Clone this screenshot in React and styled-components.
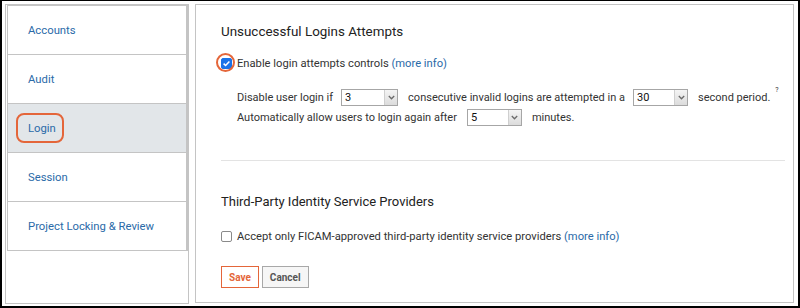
import React from 'react';
import styled, { createGlobalStyle } from 'styled-components';

const GlobalStyle = createGlobalStyle`
  html, body {
    margin: 0;
    padding: 0;
    background: #fff;
  }
  body {
    font-family: Roboto, "Liberation Sans", Arial, sans-serif;
    color: #333;
  }
`;

const Frame = styled.div`
  box-sizing: border-box;
  width: 800px;
  height: 308px;
  border-style: solid;
  border-color: #000;
  border-width: 1px 2px 2px 2px;
  padding: 3px 4px 0 3px;
  display: flex;
  gap: 6px;
  align-items: flex-start;
`;

const SideNav = styled.nav`
  box-sizing: border-box;
  width: 184px;
  height: 300px;
  border: 1px solid #c4c4c4;
  padding: 0 0 0 1px;
`;

const NavList = styled.ul`
  list-style: none;
  margin: 0;
  padding: 0;
  border: 1px solid #c4c4c4;
  border-right-width: 2px;
  border-bottom: none;
`;

const NavItem = styled.li`
  box-sizing: border-box;
  height: 49px;
  display: flex;
  align-items: center;
  padding-left: 20px;
  border-bottom: 1px solid #c4c4c4;
  background: ${({ active }) => (active ? '#e2e6e9' : '#fff')};
`;

const NavLink = styled.span`
  font-size: 11.3px;
  color: #2a6aa8;
  position: relative;
`;

const Highlight = styled.span`
  position: absolute;
  left: -12px;
  top: -9px;
  width: 44px;
  height: 26px;
  border: 2px solid #e4663a;
  border-radius: 8px;
`;

const Content = styled.section`
  box-sizing: border-box;
  width: 599px;
  height: 299px;
  border: 1px solid #c4c4c4;
  padding: 19px 8px 0 25px;
  display: flex;
  flex-direction: column;
`;

const Heading = styled.h3`
  margin: 0;
  font-size: ${({ size }) => size || 13}px;
  font-weight: 400;
  color: #222;
  line-height: 16px;
`;

const CheckRow = styled.label`
  display: flex;
  align-items: center;
  gap: 5px;
  font-size: 11.2px;
  color: #333;
  margin-top: ${({ top }) => top}px;
`;

const Box = styled.span`
  box-sizing: border-box;
  width: 11px;
  height: 11px;
  border-radius: 2px;
  border: 1px solid ${({ checked }) => (checked ? '#1a73e8' : '#8a8a8a')};
  background: ${({ checked }) => (checked ? '#1a73e8' : '#fff')};
  display: inline-flex;
  align-items: center;
  justify-content: center;
  position: relative;
  flex-shrink: 0;
`;

const Ring = styled.span`
  position: absolute;
  left: -6px;
  top: -6px;
  width: 19px;
  height: 19px;
  box-sizing: border-box;
  border: 2px solid #e4663a;
  border-radius: 50%;
`;

const More = styled.span`
  color: #2a6aa8;
`;

const Settings = styled.div`
  margin-top: 18px;
  padding-left: 16px;
  display: flex;
  flex-direction: column;
  gap: 2px;
`;

const SettingLine = styled.div`
  display: flex;
  align-items: center;
  font-size: 11px;
  color: #333;
  height: 18px;
`;

const Select = styled.span`
  box-sizing: border-box;
  display: inline-flex;
  align-items: center;
  justify-content: space-between;
  width: ${({ w }) => w}px;
  height: 17px;
  border: 1px solid #a6a6a6;
  margin: 0 ${({ after }) => after}px 0 ${({ before }) => before}px;
  padding-left: 3px;
  font-size: 11px;
  color: #111;
  background: #fff;
`;

const Arrow = styled.span`
  box-sizing: border-box;
  width: 13px;
  height: 15px;
  border-left: 1px solid #cfcfcf;
  background: linear-gradient(#f4f4f4, #dcdcdc);
  display: inline-flex;
  align-items: center;
  justify-content: center;
`;

const Sup = styled.sup`
  font-size: 7px;
  margin-left: 5px;
  align-self: flex-start;
  margin-top: -2px;
`;

const Divider = styled.hr`
  border: none;
  border-top: 1px solid #e3e3e3;
  margin: 34px 0 0 0;
  width: 564px;
`;

const SecondHeading = styled(Heading)`
  margin-top: 33px;
`;

const Actions = styled.div`
  display: flex;
  gap: 3px;
  margin-top: 23px;
`;

const Button = styled.button`
  box-sizing: border-box;
  height: 22px;
  padding: 0 7px;
  font-family: Roboto, "Liberation Sans", Arial, sans-serif;
  font-size: 10px;
  font-weight: 700;
  background: ${({ primary }) => (primary ? '#fff' : '#f6f6f6')};
  color: ${({ primary }) => (primary ? '#e4663a' : '#555')};
  border: 1px solid ${({ primary }) => (primary ? '#e4663a' : '#a8a8a8')};
  border-radius: 0;
`;

const Chevron = () => (
  <svg width="7" height="5" viewBox="0 0 7 5">
    <path d="M0.8 1 L3.5 3.8 L6.2 1" fill="none" stroke="#6a6a6a" strokeWidth="1.3" />
  </svg>
);

const Dropdown = ({ value, w, before = 8, after = 10 }) => (
  <Select w={w} before={before} after={after}>
    {value}
    <Arrow>
      <Chevron />
    </Arrow>
  </Select>
);

const Check = () => (
  <svg width="9" height="9" viewBox="0 0 9 9">
    <path d="M1.6 4.6 L3.6 6.5 L7.4 2.4" fill="none" stroke="#fff" strokeWidth="1.5" />
  </svg>
);

const navItems = ['Accounts', 'Audit', 'Login', 'Session', 'Project Locking & Review'];

export default function App() {
  return (
    <>
      <GlobalStyle />
      <Frame>
        <SideNav>
          <NavList>
            {navItems.map((item) => (
              <NavItem key={item} active={item === 'Login'}>
                <NavLink>
                  {item === 'Login' && <Highlight />}
                  {item}
                </NavLink>
              </NavItem>
            ))}
          </NavList>
        </SideNav>
        <Content>
          <Heading size={13.4}>Unsuccessful Logins Attempts</Heading>
          <CheckRow top={17}>
            <Box checked>
              <Check />
              <Ring />
            </Box>
            <span>
              Enable login attempts controls <More>(more info)</More>
            </span>
          </CheckRow>
          <Settings>
            <SettingLine>
              Disable user login if
              <Dropdown value="3" w={57} />
              consecutive invalid logins are attempted in a
              <Dropdown value="30" w={55} />
              second period.
              <Sup>?</Sup>
            </SettingLine>
            <SettingLine>
              Automatically allow users to login again after
              <Dropdown value="5" w={55} before={10} />
              minutes.
            </SettingLine>
          </Settings>
          <Divider />
          <SecondHeading>Third-Party Identity Service Providers</SecondHeading>
          <CheckRow top={20}>
            <Box />
            <span>
              Accept only FICAM-approved third-party identity service providers <More>(more info)</More>
            </span>
          </CheckRow>
          <Actions>
            <Button primary>Save</Button>
            <Button>Cancel</Button>
          </Actions>
        </Content>
      </Frame>
    </>
  );
}
